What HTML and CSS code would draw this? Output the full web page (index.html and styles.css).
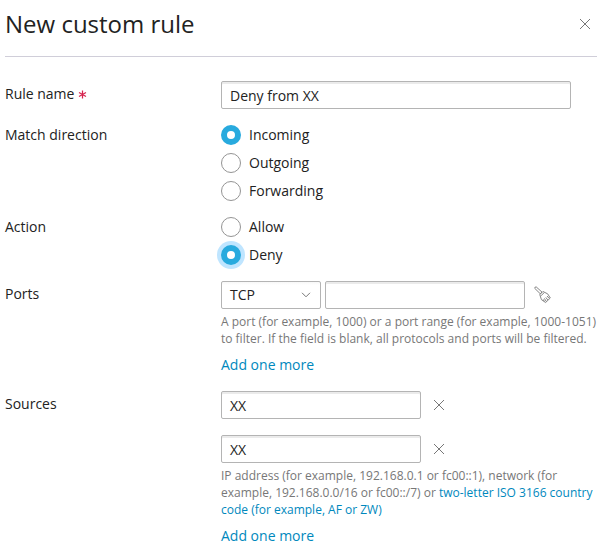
FILE: index.html
```html
<!DOCTYPE html>
<html lang="en">
<head>
<meta charset="utf-8">
<title>New custom rule</title>
<link rel="stylesheet" href="styles.css">
</head>
<body>
<main class="drawer">
  <header class="drawer-header">
    <h1>New custom rule</h1>
    <svg class="close" width="12" height="12" viewBox="0 0 12 12"><path d="M1 1l10 10M11 1L1 11"/></svg>
  </header>
  <form class="form">
    <div class="row row-name">
      <label class="label">Rule name <svg class="required" width="9" height="9" viewBox="0 0 9 9"><path d="M4.5 0.5v8M1 2.5l7 4M8 2.5l-7 4"/></svg></label>
      <div class="field"><div class="input input-wide">Deny from XX</div></div>
    </div>
    <div class="row row-radio">
      <div class="label">Match direction</div>
      <div class="field options">
        <label class="option"><span class="radio checked"></span>Incoming</label>
        <label class="option"><span class="radio"></span>Outgoing</label>
        <label class="option"><span class="radio"></span>Forwarding</label>
      </div>
    </div>
    <div class="row row-radio">
      <div class="label">Action</div>
      <div class="field options">
        <label class="option"><span class="radio"></span>Allow</label>
        <label class="option"><span class="radio checked focused"></span>Deny</label>
      </div>
    </div>
    <div class="row row-ports">
      <div class="label">Ports</div>
      <div class="field">
        <div class="controls">
          <div class="input select">TCP<svg width="10" height="6" viewBox="0 0 10 6"><path d="M1 .8l4 4 4-4"/></svg></div>
          <div class="input input-port"></div>
          <svg class="broom" width="18" height="18" viewBox="0 0 18 18"><path d="M.7 2.3Q.6.9 2.2.9L8 6.1 6.3 7.8zM5.8 8.6L8.9 5.5 13.6 7.8 16.3 12 11.6 16.5 7.4 13.6zM7 9.8l3-3M10.2 15.2l-1-1.8M12.2 15.4l-1.8-3M13.8 14l-2-2.6M15.2 12.4L13 10"/></svg>
        </div>
        <p class="hint">A port (for example, 1000) or a port range (for example, 1000-1051)<br>to filter. If the field is blank, all protocols and ports will be filtered.</p>
        <a class="add">Add one more</a>
      </div>
    </div>
    <div class="row row-sources">
      <div class="label">Sources</div>
      <div class="field">
        <div class="controls source"><div class="input input-source">XX</div><svg class="remove" width="12" height="12" viewBox="0 0 12 12"><path d="M1 1l10 10M11 1L1 11"/></svg></div>
        <div class="controls"><div class="input input-source">XX</div><svg class="remove" width="12" height="12" viewBox="0 0 12 12"><path d="M1 1l10 10M11 1L1 11"/></svg></div>
        <p class="hint">IP address (for example, 192.168.0.1 or fc00::1), network (for<br>example, 192.168.0.0/16 or fc00::/7) or <a>two-letter ISO 3166 country<br>code (for example, AF or ZW)</a></p>
        <a class="add">Add one more</a>
      </div>
    </div>
  </form>
</main>
</body>
</html>
```

FILE: styles.css
```css
* { box-sizing: border-box; }
body { margin: 0; background: #fff; color: #222; font: 14px/20px "Open Sans", "Noto Sans", sans-serif; }
.drawer { width: 608px; height: 555px; padding: 0 11px 0 5px; overflow: hidden; }
.drawer-header { display: flex; justify-content: space-between; height: 57px; padding: 8px 6px 0 0; border-bottom: 1px solid #d0ced9; }
h1 { margin: 0; font-size: 24px; line-height: 32px; font-weight: 400; }
svg { fill: none; stroke: #777; stroke-width: 1; flex: none; }
.close { margin-top: 10px; }
.form { padding-top: 24px; }
.row { display: flex; }
.label { width: 216px; flex: none; padding-top: 3px; }
.required { stroke: #d6244f; stroke-width: 1.25; }
.row-name { height: 44px; }
.row-radio { margin-bottom: 16px; }
.row-radio .label { padding-top: 0; }
.options { display: flex; flex-direction: column; gap: 8px; }
.option { display: flex; align-items: center; gap: 8px; height: 20px; }
.radio { width: 20px; height: 20px; border: 1px solid #949494; border-radius: 50%; background: #fff; }
.radio.checked { border: 6px solid #28aade; }
.focused { box-shadow: 0 0 0 4px #bfe5ff; }
.controls { display: flex; align-items: center; height: 28px; }
.input { height: 28px; padding: 4px 8px; border: 1px solid #b4b4b4; border-radius: 2px; box-shadow: inset 0 2px 0 #ebebeb; line-height: 20px; }
.input-wide { width: 350px; }
.select { width: 100px; margin-right: 4px; padding-right: 9px; display: flex; align-items: center; justify-content: space-between; box-shadow: none; background: linear-gradient(#f7f7f7, #fff 3px); }
.input-port { width: 200px; }
.broom { margin-left: 9px; stroke-width: 0.9; }
.hint { margin: 4px 0 0; color: #777; font-size: 12px; line-height: 17px; white-space: nowrap; }
a { color: #0088bd; }
.add { display: block; margin-top: 8px; }
.row-ports { height: 110px; }
.source { margin-bottom: 16px; }
.input-source { width: 200px; margin-right: 12px; }
```
